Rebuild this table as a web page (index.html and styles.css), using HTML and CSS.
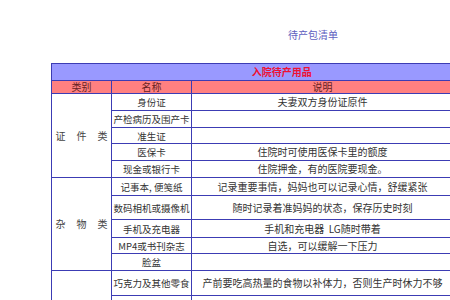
FILE: index.html
```html
<!DOCTYPE html>
<html>
<head>
<meta charset="utf-8">
<link rel="stylesheet" href="styles.css">
</head>
<body>
<div class="page">
  <div class="title">待产包清单</div>
  <table class="sheet">
    <colgroup>
      <col class="c1"><col class="c2"><col class="c3"><col class="c4">
    </colgroup>
    <tr class="h1"><td colspan="4">入院待产用品</td></tr>
    <tr class="h2"><td>类别</td><td>名称</td><td>说明</td><td></td></tr>
    <tr class="r17"><td rowspan="5" class="cat"><div class="spread"><span>证</span><span>件</span><span>类</span></div></td><td>身份证</td><td class="desc">夫妻双方身份证原件</td><td></td></tr>
    <tr class="r17"><td>产检病历及围产卡</td><td></td><td></td></tr>
    <tr class="r16"><td>准生证</td><td></td><td></td></tr>
    <tr class="r17"><td>医保卡</td><td class="desc">住院时可使用医保卡里的额度</td><td></td></tr>
    <tr class="r17"><td>现金或银行卡</td><td class="desc">住院押金，有的医院要现金。</td><td></td></tr>
    <tr class="r18"><td rowspan="5" class="cat"><div class="spread"><span>杂</span><span>物</span><span>类</span></div></td><td>记事本, 便笺纸</td><td class="desc">记录重要事情，妈妈也可以记录心情，舒缓紧张</td><td></td></tr>
    <tr class="r24"><td>数码相机或摄像机</td><td class="desc">随时记录着准妈妈的状态，保存历史时刻</td><td></td></tr>
    <tr class="r18"><td>手机及充电器</td><td class="desc">手机和充电器&nbsp;&nbsp;LG随时带着</td><td></td></tr>
    <tr class="r16"><td>MP4或书刊杂志</td><td class="desc">自选，可以缓解一下压力</td><td></td></tr>
    <tr class="r17"><td>脸盆</td><td></td><td></td></tr>
    <tr class="r25"><td rowspan="2" class="cat"></td><td>巧克力及其他零食</td><td class="desc">产前要吃高热量的食物以补体力，否则生产时休力不够</td><td></td></tr>
    <tr class="r17"><td></td><td></td><td></td></tr>
  </table>
</div>
</body>
</html>
```
FILE: styles.css
```css
html, body {
  margin: 0;
  padding: 0;
  background: #ffffff;
  overflow: hidden;
}
.page {
  width: 450px;
  height: 300px;
  overflow: hidden;
  padding-top: 29px;
  box-sizing: border-box;
  font-family: "Noto Sans CJK SC", "Noto Sans", sans-serif;
}
.title {
  margin-left: 288px;
  font-size: 10px;
  line-height: 12px;
  color: #6060c0;
  height: 34px;
}
.sheet {
  margin-left: 51px;
  border-collapse: collapse;
  table-layout: fixed;
  width: 460px;
  font-size: 9.5px;
  color: #333333;
}
.c1 { width: 60px; }
.c2 { width: 80px; }
.c3 { width: 262px; }
.c4 { width: 58px; }
.sheet td {
  border: 1px solid #3c3cb4;
  padding: 0;
  text-align: center;
  white-space: nowrap;
  overflow: hidden;
  line-height: 12px;
}
.sheet td.desc { font-size: 10px; }
.sheet td:last-child { border-right: none; }
.h1 td {
  background: #9999ff;
  color: #ee1133;
  font-weight: bold;
  font-size: 10px;
  height: 16px;
}
.h2 td {
  background: #ff8080;
  color: #662222;
  font-size: 10px;
  height: 12px;
}
.r16 td { height: 15px; }
.r17 td { height: 16px; }
.r18 td { height: 17px; }
.r24 td { height: 23px; }
.r25 td { height: 24px; }
.spread {
  display: flex;
  justify-content: center;
  gap: 11px;
  color: #444444;
  font-size: 10px;
}
```
